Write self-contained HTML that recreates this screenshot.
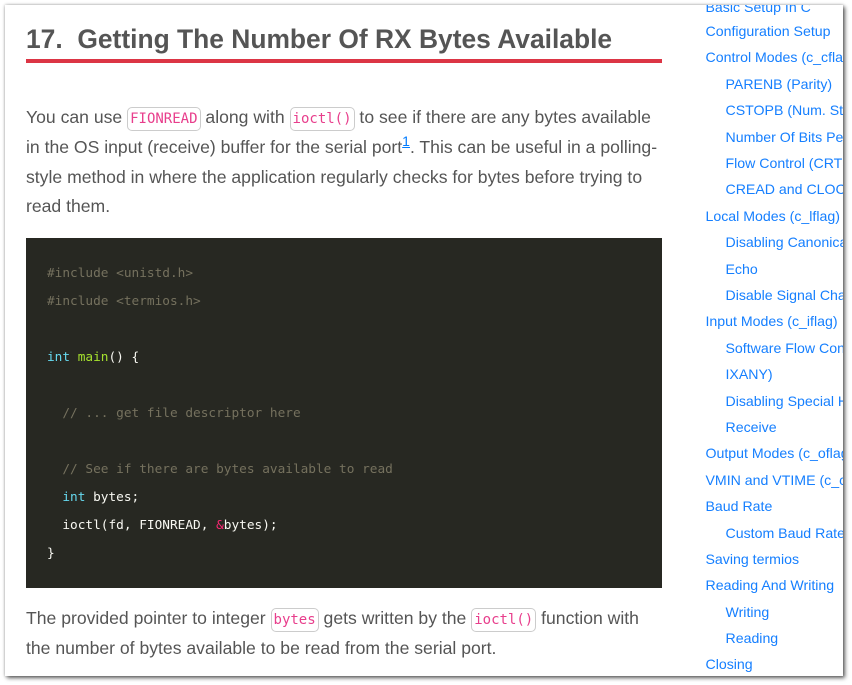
<!DOCTYPE html>
<html><head><meta charset="utf-8">
<style>
html,body{margin:0;padding:0;width:852px;height:685px;overflow:hidden;background:#fff}
#card{position:absolute;left:5px;top:5px;width:838px;height:671px;background:#fff;box-shadow:2px 2px 4px 0 rgba(0,0,0,.6),0 0 3px rgba(0,0,0,.3);overflow:hidden}
.a{position:absolute;white-space:pre;margin:0}
#in{position:absolute;left:-5px;top:-5px;width:852px;height:685px}
h1{position:absolute;left:26px;top:23px;margin:0;font:bold 26.4px/32px "Liberation Sans",sans-serif;color:#555;white-space:pre}
#rule{position:absolute;left:26px;top:59px;width:636px;height:4px;background:#dc3545}
.p{font:17.6px/30px "Liberation Sans",sans-serif;color:#555;left:26px}
code{font:14px/20px "DejaVu Sans Mono",monospace;color:#e83e8c;border:1px solid #ccc;border-radius:5px;padding:3px 2px;background:#fff}
sup{font-size:14px;line-height:0;color:#007bff;text-decoration:underline}
#pre{position:absolute;left:26px;top:238px;width:636px;height:350px;background:#272822}
.c{font:12.77px/28px "DejaVu Sans Mono",monospace;color:#f8f8f2;left:47px}
.m{color:#75715e}.k{color:#66d9ef}.f{color:#a6e22e}.o{color:#f92672}
.s{font:14.15px/20px "Liberation Sans",sans-serif;color:#157fff;left:705.5px;text-decoration:none}
.t{left:725.5px}
#clip{position:absolute;left:695px;top:0;width:143px;height:671px;overflow:hidden}
#clip .s{margin-left:-700px;margin-top:-5px}
</style></head><body>
<div id="card"><div id="in">
<h1>17.&nbsp; Getting The Number Of RX Bytes Available</h1>
<div id="rule"></div>
<p class="a p" style="top:102px">You can use <code>FIONREAD</code> along with <code>ioctl()</code> to see if there are any bytes available</p>
<p class="a p" style="top:132px">in the OS input (receive) buffer for the serial port<sup>1</sup>. This can be useful in a polling-</p>
<p class="a p" style="top:162px">style method in where the application regularly checks for bytes before trying to</p>
<p class="a p" style="top:191px">read them.</p>
<div id="pre"></div>
<div class="a c m" style="top:260px">#include &lt;unistd.h&gt;</div>
<div class="a c m" style="top:288px">#include &lt;termios.h&gt;</div>
<div class="a c" style="top:344px"><span class="k">int</span> <span class="f">main</span>() {</div>
<div class="a c m" style="top:400px">  // ... get file descriptor here</div>
<div class="a c m" style="top:456px">  // See if there are bytes available to read</div>
<div class="a c" style="top:484px">  <span class="k">int</span> bytes;</div>
<div class="a c" style="top:512px">  ioctl(fd, FIONREAD, <span class="o">&amp;</span>bytes);</div>
<div class="a c" style="top:540px">}</div>
<p class="a p" style="top:603px">The provided pointer to integer <code>bytes</code> gets written by the <code>ioctl()</code> function with</p>
<p class="a p" style="top:633px">the number of bytes available to be read from the serial port.</p>
</div>
<div id="clip">
<div class="a s" style="top:-3px">Basic Setup In C</div>
<div class="a s" style="top:21px">Configuration Setup</div>
<div class="a s" style="top:47px">Control Modes (c_cflag)</div>
<div class="a s t" style="top:74px">PARENB (Parity)</div>
<div class="a s t" style="top:100px">CSTOPB (Num. Stop Bits)</div>
<div class="a s t" style="top:127px">Number Of Bits Per Byte</div>
<div class="a s t" style="top:153px">Flow Control (CRTSCTS)</div>
<div class="a s t" style="top:179px">CREAD and CLOCAL</div>
<div class="a s" style="top:206px">Local Modes (c_lflag)</div>
<div class="a s t" style="top:232px">Disabling Canonical Mode</div>
<div class="a s t" style="top:259px">Echo</div>
<div class="a s t" style="top:285px">Disable Signal Chars</div>
<div class="a s" style="top:311px">Input Modes (c_iflag)</div>
<div class="a s t" style="top:338px">Software Flow Control</div>
<div class="a s t" style="top:364px">IXANY)</div>
<div class="a s t" style="top:391px">Disabling Special Handling</div>
<div class="a s t" style="top:417px">Receive</div>
<div class="a s" style="top:443px">Output Modes (c_oflag)</div>
<div class="a s" style="top:470px">VMIN and VTIME (c_cc)</div>
<div class="a s" style="top:496px">Baud Rate</div>
<div class="a s t" style="top:523px">Custom Baud Rates</div>
<div class="a s" style="top:549px">Saving termios</div>
<div class="a s" style="top:575px">Reading And Writing</div>
<div class="a s t" style="top:602px">Writing</div>
<div class="a s t" style="top:628px">Reading</div>
<div class="a s" style="top:654px">Closing</div>
</div>
</div>
</body></html>
